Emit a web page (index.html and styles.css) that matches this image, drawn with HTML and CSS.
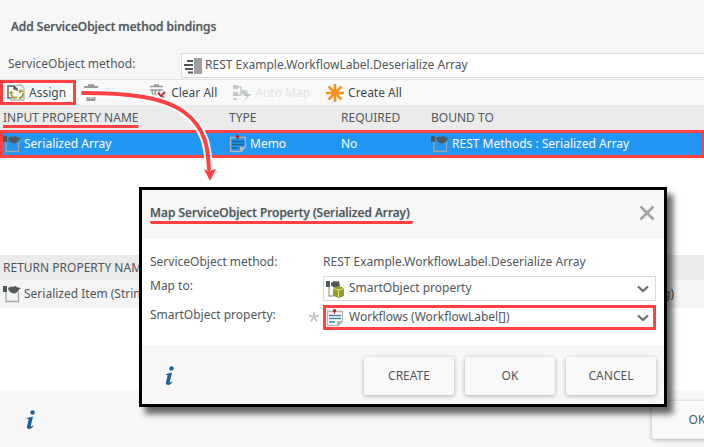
FILE: index.html
```html
<!DOCTYPE html>
<html lang="en">
<head>
<meta charset="utf-8">
<title>Add ServiceObject method bindings</title>
<link rel="stylesheet" href="styles.css">
</head>
<body>
<svg class="sprite" aria-hidden="true">
  <symbol id="prop" viewBox="0 0 18 18">
    <path d="M3 7v9.500h12.500V7" fill="none" stroke="#a3a6a8" stroke-width="1.300"/>
    <path d="M0 1h4v6H0zM5 3l3-1.500 2 .5 2-1 3 1.500 3 .5-2 1.500-1 2-3 2-3-.5-3-2z" fill="#50585a"/>
  </symbol>
  <symbol id="memo" viewBox="0 0 18 18">
    <path d="M1.500 2.500h15v9l-4 5h-11z" fill="none" stroke="#b4b4b4" stroke-width="1.300"/>
    <path d="M11 17v-5h6z" fill="#b4b4b4"/>
    <path d="M3 6.500h12M3 9.500h12M3 13h6" stroke="var(--lines)" stroke-width="1.400"/>
    <path d="M8.500 2v3" stroke="#b02a3c"/><circle cx="8.500" cy="1.800" r="1.800" fill="#c0202f"/>
  </symbol>
  <symbol id="chevron" viewBox="0 0 12 8">
    <path d="M1 1.500l5 4.500 5-4.500" fill="none" stroke="#666e70" stroke-width="2.200"/>
  </symbol>
  <symbol id="trash" viewBox="0 0 18 18">
    <path d="M2 3h14M6 1.200h6" stroke="#999" stroke-width="1.800" fill="none"/>
    <path d="M2 7h14M4.500 7l1 9h7l1-9M7.500 8v7M10.500 8v7" stroke="#999" stroke-width="1.800" fill="none"/>
  </symbol>
</svg>

<main class="page">
  <header class="page-head"><h1>Add ServiceObject method bindings</h1></header>
  <div class="method">
    <label for="method">ServiceObject method:</label>
    <div class="field">
      <svg class="icon" viewBox="0 0 18 18"><path d="M10 1h8v16h-8z" fill="#a0a0a0"/><path d="M3 4h6M0 8h9M1 12h8M4 15.500h5" stroke="#4c5557" stroke-width="2"/></svg>
      <input id="method" type="text" value="REST Example.WorkflowLabel.Deserialize Array" readonly>
    </div>
  </div>
  <nav class="toolbar">
    <button type="button" class="tool assign">
      <svg class="icon" viewBox="0 0 18 18"><path d="M5 14H1V2h6l3 3v2M7 2v3h3" fill="#fff" stroke="#555c5e" stroke-width="1.400"/><path d="M8 2l3-1h3l3 3v12H4v-3" fill="none" stroke="#b3b3b3" stroke-width="1.300"/><path d="M4 8c0 5 3 7 6 5M16 9c0 4-2 5-4 5M13 9V6" fill="none" stroke="#a2a238" stroke-width="2"/><path d="M1.500 9.500L4 6.500 7 9.500zM11 8l3-3 3 3z" fill="#a2a238"/></svg>
      Assign</button>
    <button type="button" class="tool off"><svg class="icon"><use href="#trash"/></svg>Clear</button>
    <button type="button" class="tool">
      <svg class="icon" viewBox="0 0 18 18"><path d="M1 2.500h13M5 1h5M1 6h13M3 6l1 6h4M6 6v6M10 6v4" fill="none" stroke="#999" stroke-width="1.500"/><path d="M9 9l3 3 4-4M11 11l4 3" fill="none" stroke="#b8283a" stroke-width="1.800"/></svg>
      Clear All</button>
    <button type="button" class="tool off">
      <svg class="icon" viewBox="0 0 18 18"><path d="M0 1h5v4H0zM0 8h5v4H0zM8 6h5v4H8zM0 14h4v2H0z" fill="#c6c9ca"/><path d="M5 3h3v8H5M8 8h3" fill="none" stroke="#c6c9ca" stroke-width="1.500"/><path d="M15 6l-5 6h4l-3 5 7-7h-4z" fill="#b5c4cc"/></svg>
      Auto Map</button>
    <button type="button" class="tool">
      <svg class="icon" viewBox="0 0 18 18"><path d="M9 0v18M0 9h18M2.500 2.500l13 13M15.500 2.500l-13 13" stroke="#f7941d" stroke-width="2.600"/></svg>
      Create All</button>
  </nav>

  <table class="grid inputs">
    <colgroup><col class="c-name"><col class="c-type"><col class="c-req"><col></colgroup>
    <thead><tr><th><span class="marked">INPUT PROPERTY NAME</span></th><th>TYPE</th><th>REQUIRED</th><th>BOUND TO</th></tr></thead>
    <tbody><tr class="selected">
      <td><span class="cell"><svg class="icon"><use href="#prop"/></svg>Serialized Array</span></td>
      <td><span class="cell"><svg class="icon"><use href="#memo"/></svg>Memo</span></td>
      <td>No</td>
      <td><span class="cell"><svg class="icon"><use href="#prop"/></svg>REST Methods : Serialized Array</span></td>
    </tr></tbody>
  </table>

  <table class="grid returns">
    <colgroup><col class="c-name"><col></colgroup>
    <thead><tr><th>RETURN PROPERTY NAME</th><th></th></tr></thead>
    <tbody><tr>
      <td><span class="cell"><svg class="icon"><use href="#prop"/></svg>Serialized Item (String)</span></td>
      <td class="tail">(String)</td>
    </tr></tbody>
  </table>

  <footer class="page-foot">
    <a class="info" href="#help" aria-label="Help"><svg viewBox="0 0 10 20"><circle cx="6.500" cy="2.500" r="2.200" fill="#1d6396"/><path d="M1 8l6-1.500-2.200 9.500q-.4 1.500 2.200-.5l.5.8Q5 19.500 3 19q-2.500-.3-2-2.600L2.700 9 .8 8.800z" fill="#1d6396"/></svg></a>
    <button type="button" class="btn">OK</button>
  </footer>
</main>

<svg class="arrow" viewBox="0 0 144 96" aria-hidden="true">
  <path class="halo" d="M7 8C48 8 86 11 108 27S132 64 133 84"/>
  <path class="line" d="M7 8C48 8 86 11 108 27S132 64 133 84"/>
  <path class="head" d="M128 84l5 2 7-2-6 12z"/>
</svg>

<section class="dialog" role="dialog" aria-labelledby="dlg-title">
  <header class="dialog-head">
    <h2 id="dlg-title">Map ServiceObject Property (Serialized Array)</h2>
    <button type="button" class="close" aria-label="Close"><svg viewBox="0 0 16 16"><path d="M1.500 1.500l13 13M14.500 1.500l-13 13" stroke="#a3a3a3" stroke-width="2.600"/></svg></button>
  </header>
  <div class="dialog-body">
    <span class="name">ServiceObject method:</span>
    <span class="value">REST Example.WorkflowLabel.Deserialize Array</span>
    <label class="name" for="mapto">Map to:</label>
    <div class="field pick">
      <svg class="icon" viewBox="0 0 18 18"><path d="M3 7v9h4" fill="none" stroke="#a3a6a8" stroke-width="1.300"/><path d="M0 1h4v6H0zM5 3l3-2 3 .5 2-.5 1 5-3 2-3-.5-3-2z" fill="#50585a"/><path d="M7 8l6-2 5 2v8l-5 2-6-2z" fill="#969b22"/><path d="M7 8.500l6 1.500 5-1.500M12.500 10v7" fill="none" stroke="#dfe0a5"/></svg>
      <select id="mapto"><option>SmartObject property</option></select>
      <svg class="chev"><use href="#chevron"/></svg>
    </div>
    <label class="name required" for="smo">SmartObject property:<svg viewBox="0 0 10 10"><path d="M5 5V0M5 5l5-1.500M5 5l3 4.500M5 5L2 9.500M5 5L0 3.500" stroke="#c8c8c8" stroke-width="2"/></svg></label>
    <div class="field pick hot">
      <svg class="icon"><use href="#memo"/></svg>
      <select id="smo"><option>Workflows (WorkflowLabel[])</option></select>
      <svg class="chev"><use href="#chevron"/></svg>
    </div>
  </div>
  <footer class="dialog-foot">
    <a class="info" href="#help" aria-label="Help"><svg viewBox="0 0 10 20"><circle cx="6.500" cy="2.500" r="2.200" fill="#1d6396"/><path d="M1 8l6-1.500-2.200 9.500q-.4 1.500 2.200-.5l.5.8Q5 19.500 3 19q-2.500-.3-2-2.600L2.700 9 .8 8.800z" fill="#1d6396"/></svg></a>
    <button type="button" class="btn">CREATE</button>
    <button type="button" class="btn">OK</button>
    <button type="button" class="btn">CANCEL</button>
  </footer>
</section>
</body>
</html>
```
FILE: styles.css
```css
* { box-sizing: border-box; }
:root {
  --text: #505759;
  --red: #ff4144;
  --bar: #f7f7f7;
  --lines: #4b7f9f;
}
body {
  margin: 0;
  position: relative;
  overflow: hidden;
  background: #fff;
  color: var(--text);
  font: 12px/16px "Noto Sans", "Open Sans", sans-serif;
}
button, input, select { font: inherit; color: inherit; }
h1, h2 { margin: 0; font-size: 12px; line-height: 16px; font-weight: 500; text-shadow: 0 0 1px #899093; }
.sprite { position: absolute; width: 0; height: 0; }
.icon { width: 18px; height: 18px; flex: none; }

.page { display: flex; flex-direction: column; min-height: 100vh; overflow: hidden; }
.page-head { background: var(--bar); padding: 19px 11px 18px; }
.method {
  display: grid;
  grid-template-columns: 173px 1fr;
  align-items: center;
  padding-left: 8px;
  padding-bottom: 1px;
  background: var(--bar);
}
.method label { padding-bottom: 4px; }
.field {
  display: flex;
  align-items: center;
  height: 25px;
  padding-left: 2px;
  gap: 3px;
  background: #fff;
  border: 1px solid #dcdcdc;
}
.method .field { border-right: 0; }
.field input, .field select {
  flex: 1;
  min-width: 0;
  border: 0;
  padding: 0 0 2px;
  background: none;
  outline: 0;
}
.toolbar {
  display: flex;
  align-items: center;
  height: 26px;
  gap: 8px;
  background: #f9f9f9;
  border-top: 1px solid #e4e4e4;
}
.tool {
  display: flex;
  align-items: center;
  gap: 4px;
  height: 25px;
  padding: 0 4px;
  border: 0;
  background: none;
  color: #434a4c;
}
.tool.off { color: #e4e4e4; }
.tool.assign { border: 3px solid var(--red); width: 76px; margin-right: -6px; }

.grid { width: 100%; table-layout: fixed; border-collapse: collapse; }
.c-name { width: 226px; }
.c-type { width: 112px; }
.c-req { width: 90px; }
.grid th {
  height: 25px;
  padding: 0 3px;
  text-align: left;
  font-weight: 400;
  background: #ebebeb;
  white-space: nowrap;
}
.grid td { height: 28px; padding: 0 3px; background: #f4f4f4; white-space: nowrap; }
.cell { display: flex; align-items: center; gap: 3px; }
.marked { text-decoration: underline 3px var(--red); text-underline-offset: 3px; text-decoration-skip-ink: none; }
.selected { outline: 3px solid var(--red); outline-offset: -3px; --lines: #20618f; }
.selected td { background: #2196f3; color: #fff; }
.returns { margin-top: 97px; }
.returns .tail { text-align: right; padding-right: 30px; }

.page-foot {
  display: flex;
  align-items: flex-start;
  justify-content: space-between;
  flex: 1;
  margin-top: 82px;
  margin-right: -38px;
  padding: 11px 0 8px 26px;
  background: var(--bar);
}
.info { display: block; width: 10px; height: 20px; }
.info svg { display: block; width: 100%; height: 100%; }
.page-foot .info { margin-top: 9px; }
.btn {
  width: 90px;
  height: 38px;
  border: 0;
  border-radius: 3px;
  background: #f9f9f9;
  box-shadow: 0 1px 4px rgba(0, 0, 0, .3);
}

.arrow { position: absolute; left: 76px; top: 85px; width: 144px; height: 96px; }
.halo, .line { fill: none; stroke-linecap: round; }
.halo { stroke: #fff; stroke-width: 8; stroke-linecap: butt; }
.line { stroke: var(--red); stroke-width: 4; }
.head { fill: var(--red); }

.dialog {
  position: absolute;
  top: 187px;
  left: 139px;
  right: 37px;
  border: 3px solid #000;
  background: #fff;
  box-shadow: 6px 7px 6px rgba(0, 0, 0, .6);
}
.dialog-head {
  display: flex;
  justify-content: space-between;
  align-items: flex-start;
  padding: 15px 9px 15px 8px;
  background: var(--bar);
}
.dialog-head h2 { padding-right: 3px; border-bottom: 3px solid var(--red); border-radius: 2px; }
.close { width: 16px; height: 16px; padding: 0; border: 0; background: none; }
.close svg { display: block; }
.dialog-body {
  display: grid;
  grid-template-columns: 173px 1fr;
  row-gap: 4px;
  padding: 13px 8px 15px;
}
.dialog-body .value { line-height: 20px; }
.name { line-height: 20px; }
.required { display: flex; justify-content: space-between; padding-right: 4px; }
.required svg { width: 10px; height: 10px; margin-top: 7px; }
.pick { padding-right: 6px; gap: 5px; }
.pick select { appearance: none; }
.pick.hot { border: 3px solid var(--red); padding-left: 0; padding-right: 4px; }
.chev { width: 12px; height: 8px; flex: none; }
.dialog-foot {
  display: flex;
  align-items: center;
  gap: 11px;
  padding: 12px 8px 9px 23px;
  background: var(--bar);
}
.dialog-foot .info { margin-right: auto; }
```
